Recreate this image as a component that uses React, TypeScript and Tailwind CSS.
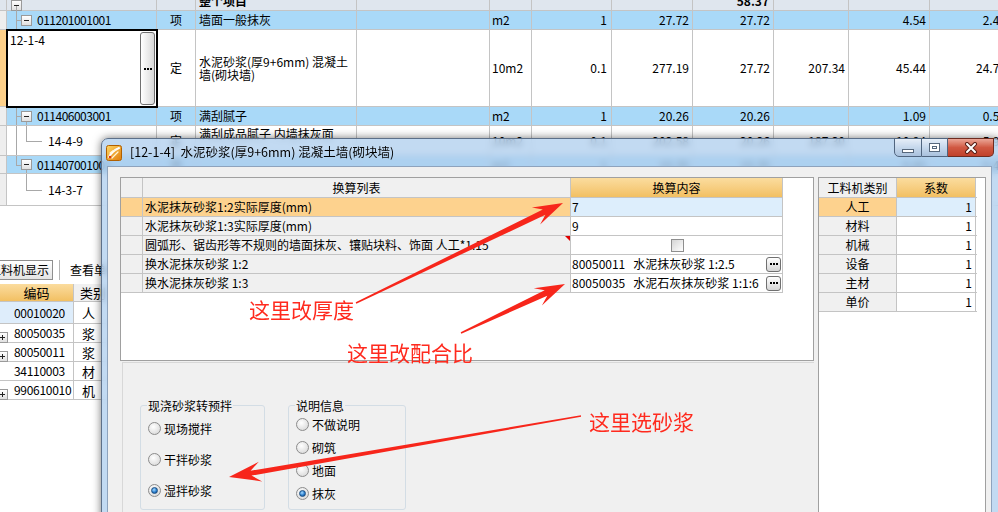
import React from "react";

const FONT = "font-['Noto_Sans_CJK_SC','Noto_Sans',sans-serif]";

const W = [
  "w-[7px]",
  "w-[150px]",
  "w-[39px]",
  "w-[161px]",
  "w-[133px]",
  "w-[42px]",
  "w-[80px]",
  "w-[81px]",
  "w-[81px]",
  "w-[75px]",
  "w-[81px]",
  "w-[80px]",
];

function Box({ plus = false }: { plus?: boolean }) {
  return (
    <span className="relative inline-flex h-[11px] w-[11px] shrink-0 items-center justify-center border border-[#9a9a9a] bg-linear-to-b from-white to-[#e0e0e0]">
      <span className="h-px w-[5px] bg-[#222]" />
      {plus && <span className="absolute h-[5px] w-px bg-[#222]" />}
    </span>
  );
}

function Dots() {
  return (
    <span className="flex gap-px">
      <span className="h-[2px] w-[2px] bg-black" />
      <span className="h-[2px] w-[2px] bg-black" />
      <span className="h-[2px] w-[2px] bg-black" />
    </span>
  );
}

function ItemCode({ code, last = false, child = false }: { code: string; last?: boolean; child?: boolean }) {
  return (
    <>
      <span className={`absolute left-[9px] top-0 w-px bg-[#a8a8a8] ${last ? "h-1/2" : "h-full"}`} />
      <span className="absolute left-[9px] top-1/2 h-px w-[5px] bg-[#a8a8a8]" />
      {child && <span className="absolute left-[19px] top-1/2 h-1/2 w-px bg-[#a8a8a8]" />}
      <div className="relative flex h-full items-center pl-[14px]">
        <Box />
        <span className="ml-[5px] tracking-[-0.5px]">{code}</span>
      </div>
    </>
  );
}

function SubCode({ code, cont = false }: { code: string; cont?: boolean }) {
  return (
    <>
      {cont && <span className="absolute left-[9px] top-0 h-full w-px bg-[#a8a8a8]" />}
      <span className="absolute left-[19px] top-0 h-1/2 w-px bg-[#a8a8a8]" />
      <span className="absolute left-[19px] top-1/2 h-px w-[16px] bg-[#a8a8a8]" />
      <div className="flex h-full items-center pl-[41px]">{code}</div>
    </>
  );
}

type GR = {
  h: string;
  bg: string;
  strip: string;
  code: React.ReactNode;
  kind?: string;
  name?: React.ReactNode;
  vals: string[];
};

function GridRow({ h, bg, strip, code, kind, name, vals }: GR) {
  return (
    <div className={`flex shrink-0 border-b border-[#c4c4c4] ${h} ${bg}`}>
      <div className={`${W[0]} shrink-0 border-r border-[#c4c4c4] ${strip}`} />
      <div className={`${W[1]} relative shrink-0 border-r border-[#c4c4c4]`}>{code}</div>
      <div className={`${W[2]} flex shrink-0 items-center justify-center border-r border-[#c4c4c4]`}>{kind}</div>
      <div className={`${W[3]} flex shrink-0 items-center border-r border-[#c4c4c4] pl-[3px]`}>{name}</div>
      <div className={`${W[4]} shrink-0 border-r border-[#c4c4c4]`} />
      <div className={`${W[5]} flex shrink-0 items-center border-r border-[#c4c4c4] pl-[2px]`}>{vals[0]}</div>
      <div className={`${W[6]} flex shrink-0 items-center justify-end border-r border-[#c4c4c4] pr-[4px]`}>{vals[1]}</div>
      <div className={`${W[7]} flex shrink-0 items-center justify-end border-r border-[#c4c4c4] pr-[3px]`}>{vals[2]}</div>
      <div className={`${W[8]} flex shrink-0 items-center justify-end border-r border-[#c4c4c4] pr-[3px]`}>{vals[3]}</div>
      <div className={`${W[9]} flex shrink-0 items-center justify-end border-r border-[#c4c4c4] pr-[3px]`}>{vals[4]}</div>
      <div className={`${W[10]} flex shrink-0 items-center justify-end border-r border-[#c4c4c4] pr-[3px]`}>{vals[5]}</div>
      <div className={`${W[11]} flex shrink-0 items-center justify-end border-r border-[#c4c4c4] pr-[3px]`}>{vals[6]}</div>
    </div>
  );
}

function Radio({ on = false, label }: { on?: boolean; label: string }) {
  return (
    <div className="flex h-[17px] items-center">
      <span className="flex h-[13px] w-[13px] items-center justify-center rounded-full border border-[#8c8c8c] bg-[radial-gradient(circle_at_40%_35%,#ffffff,#d2d2d2)]">
        {on && (
          <span className="h-[7px] w-[7px] rounded-full border border-[#1d4f82] bg-[radial-gradient(circle_at_40%_35%,#a8dcff,#2a7fd0_55%,#0c3d74)]" />
        )}
      </span>
      <span className="ml-[3px]">{label}</span>
    </div>
  );
}

function arrowPts(x1: number, y1: number, x2: number, y2: number, w0: number, w1: number, hl: number, hw: number) {
  const dx = x2 - x1;
  const dy = y2 - y1;
  const L = Math.hypot(dx, dy);
  const ux = dx / L;
  const uy = dy / L;
  const px = -uy;
  const py = ux;
  const nx = x2 - ux * hl * 0.7;
  const ny = y2 - uy * hl * 0.7;
  const bx = x2 - ux * hl;
  const by = y2 - uy * hl;
  const p = (x: number, y: number) => `${x.toFixed(1)},${y.toFixed(1)}`;
  return [
    p(x1 + (px * w0) / 2, y1 + (py * w0) / 2),
    p(nx + (px * w1) / 2, ny + (py * w1) / 2),
    p(bx + (px * hw) / 2, by + (py * hw) / 2),
    p(x2, y2),
    p(bx - (px * hw) / 2, by - (py * hw) / 2),
    p(nx - (px * w1) / 2, ny - (py * w1) / 2),
    p(x1 - (px * w0) / 2, y1 - (py * w0) / 2),
  ].join(" ");
}

export default function App() {
  const rowsList = [
    "水泥抹灰砂浆1:2实际厚度(mm)",
    "水泥抹灰砂浆1:3实际厚度(mm)",
    "圆弧形、锯齿形等不规则的墙面抹灰、镶贴块料、饰面 人工*1.15",
    "换水泥抹灰砂浆 1:2",
    "换水泥抹灰砂浆 1:3",
  ];
  const cats = ["人工", "材料", "机械", "设备", "主材", "单价"];

  return (
    <div className={`relative h-[512px] w-[998px] overflow-hidden bg-white text-[12px] leading-none text-black ${FONT}`}>
      {/* background grid */}
      <div className="flex w-[1010px] flex-col">
        <div className="flex h-[11px] shrink-0 border-b border-[#c4c4c4] bg-[#dfe6ee]">
          <div className="w-[7px] shrink-0 border-r border-[#c4c4c4]" />
          <div className="relative w-[150px] shrink-0 border-r border-[#c4c4c4]">
            <span className="absolute -top-[5px] left-[4px]">
              <Box />
            </span>
            <span className="absolute left-[9px] top-[6px] h-[5px] w-px bg-[#a8a8a8]" />
          </div>
          <div className="w-[39px] shrink-0 border-r border-[#c4c4c4]" />
          <div className="flex w-[161px] shrink-0 items-end border-r border-[#c4c4c4] pl-[3px] font-bold leading-[12px]">
            <span className="relative -top-[3px]">整个项目</span>
          </div>
          <div className="w-[133px] shrink-0 border-r border-[#c4c4c4]" />
          <div className="w-[42px] shrink-0 border-r border-[#c4c4c4]" />
          <div className="w-[80px] shrink-0 border-r border-[#c4c4c4]" />
          <div className="w-[81px] shrink-0 border-r border-[#c4c4c4]" />
          <div className="flex w-[81px] shrink-0 items-end justify-end border-r border-[#c4c4c4] pr-[4px] font-bold leading-[12px]">
            <span className="relative -top-[3px]">58.37</span>
          </div>
          <div className="w-[75px] shrink-0 border-r border-[#c4c4c4]" />
          <div className="w-[81px] shrink-0 border-r border-[#c4c4c4]" />
          <div className="w-[80px] shrink-0 border-r border-[#c4c4c4]" />
        </div>
        <GridRow
          h="h-[19px]"
          bg="bg-[#a9d9f8]"
          strip="bg-[#eeeeee]"
          code={<ItemCode code="011201001001" />}
          kind="项"
          name="墙面一般抹灰"
          vals={["m2", "1", "27.72", "27.72", "", "4.54", "2.47"]}
        />
        <GridRow
          h="h-[77px]"
          bg="bg-white"
          strip="bg-[#fdd08a]"
          code={
            <div className="absolute -left-[1px] -top-[1px] z-10 h-[79px] w-[152px] border-2 border-black bg-white">
              <span className="absolute left-[2px] top-[3px]">12-1-4</span>
              <span className="absolute bottom-[1px] right-[1px] top-[1px] flex w-[15px] items-center justify-center rounded-[3px] border border-[#707070] bg-linear-to-r from-white to-[#d8d8d8]">
                <Dots />
              </span>
            </div>
          }
          kind="定"
          name={
            <div className="leading-[13px]">
              水泥砂浆(厚9+6mm) 混凝土
              <br />
              墙(砌块墙)
            </div>
          }
          vals={["10m2", "0.1", "277.19", "27.72", "207.34", "45.44", "24.71"]}
        />
        <GridRow
          h="h-[19px]"
          bg="bg-[#a9d9f8]"
          strip="bg-[#eeeeee]"
          code={<ItemCode code="011406003001" child />}
          kind="项"
          name="满刮腻子"
          vals={["m2", "1", "20.26", "20.26", "", "1.09", "0.59"]}
        />
        <GridRow
          h="h-[30px]"
          bg="bg-white"
          strip="bg-[#eeeeee]"
          code={<SubCode code="14-4-9" cont />}
          kind="定"
          name={<div className="-mt-[14px]">满刮成品腻子 内墙抹灰面</div>}
          vals={["10m2", "0.1", "202.58", "20.26", "187.30", "10.94", "5.90"]}
        />
        <GridRow
          h="h-[18px]"
          bg="bg-[#a9d9f8]"
          strip="bg-[#eeeeee]"
          code={<ItemCode code="011407001001" last child />}
          kind="项"
          name=""
          vals={["m2", "1", "10.35", "10.35", "", "0.85", "0.43"]}
        />
        <GridRow
          h="h-[32px]"
          bg="bg-white"
          strip="bg-[#eeeeee]"
          code={<SubCode code="14-3-7" />}
          vals={["", "", "", "", "", "", ""]}
        />
      </div>

      {/* lower-left panel of the main window */}
      <div className="mt-[54px] flex h-[20px] items-center">
        <div className="-ml-[16px] flex h-[20px] items-center border border-[#8e8e8e] bg-linear-to-b from-white to-[#e4e4e4] pl-[4px] pr-[3px]">
          工料机显示
        </div>
        <span className="ml-[6px] h-[20px] w-px bg-[#b4b4b4]" />
        <span className="ml-[10px]">查看单价构成</span>
      </div>
      <div className="mt-[4px] w-[130px]">
        <div className="flex h-[18px] border-b border-[#c4c4c4]">
          <div className="flex w-[74px] items-center justify-center border-r border-[#c4c4c4] bg-linear-to-b from-[#fbdc9e] to-[#f2c062] text-[13px]">编码</div>
          <div className="flex w-[40px] items-center border-r border-[#c4c4c4] bg-[#f0f0f0] pl-[6px] text-[13px]">类别</div>
        </div>
        {[
          ["00010020", "人", false],
          ["80050035", "浆", true],
          ["80050011", "浆", true],
          ["34110003", "材", false],
          ["990610010", "机", true],
        ].map(([c, t, p], i) => (
          <div key={i} className={`flex border-b border-[#c4c4c4] ${i === 0 ? "h-[22px]" : "h-[19px]"}`}>
            <div className={`relative flex w-[74px] items-center border-r border-[#c4c4c4] pl-[14px] tracking-[-0.3px] ${i === 0 ? "bg-[#deedfb]" : "bg-white"}`}>
              {p && (
                <span className="absolute -left-[3px] top-[3px]">
                  <Box plus />
                </span>
              )}
              {c as string}
            </div>
            <div className="flex w-[40px] items-center border-r border-[#c4c4c4] pl-[8px] text-[13px]">{t as string}</div>
          </div>
        ))}
      </div>

      {/* dialog window */}
      <div className="absolute left-[101px] top-[138px] flex h-[390px] w-[900px] flex-col rounded-t-[7px] border border-[#5d7089] bg-[#aecdee]/75 shadow-[0_0_9px_rgba(0,0,0,0.55)] backdrop-blur-[3px]">
        <div className="flex h-[27px] items-center">
          <svg width="16" height="16" viewBox="0 0 16 16" className="ml-[4px] shrink-0">
            <defs>
              <linearGradient id="ig" x1="0" y1="0" x2="1" y2="1">
                <stop offset="0" stopColor="#ffd866" />
                <stop offset="1" stopColor="#e07c0a" />
              </linearGradient>
            </defs>
            <rect x="0.5" y="0.5" width="15" height="15" rx="2" fill="url(#ig)" stroke="#b06000" />
            <path d="M3 12 C5 8 8 5 13 3" stroke="#fff" strokeWidth="2" fill="none" strokeLinecap="round" />
            <path d="M4 8 C6 6 8 5 10 5 M6 13 C8 11 10 9 12 7" stroke="#fff6d8" strokeWidth="1.2" fill="none" strokeLinecap="round" />
            <circle cx="4" cy="12" r="1.3" fill="#d93a1a" />
          </svg>
          <span className="ml-[8px] whitespace-nowrap text-[12.5px]">[12-1-4]&nbsp; 水泥砂浆(厚9+6mm) 混凝土墙(砌块墙)</span>
          <div className="-mt-px ml-auto mr-[6px] flex self-start">
            <div className="flex h-[19px] w-[28px] items-center justify-center rounded-bl-[5px] border border-[#50657f] bg-linear-to-b from-[#e6eef8] via-[#c6d8ec] to-[#a9c1dd]">
              <span className="mt-[6px] h-[4px] w-[12px] border border-[#56677c] bg-white" />
            </div>
            <div className="flex h-[19px] w-[26px] items-center justify-center border-y border-r border-[#50657f] bg-linear-to-b from-[#e6eef8] via-[#c6d8ec] to-[#a9c1dd]">
              <span className="flex h-[9px] w-[11px] items-center justify-center border border-[#56677c] bg-white">
                <span className="h-[3px] w-[5px] border border-[#56677c]" />
              </span>
            </div>
            <div className="flex h-[19px] w-[46px] items-center justify-center rounded-br-[5px] border-y border-r border-[#6e2b1f] bg-linear-to-b from-[#eaa596] via-[#d05842] to-[#c0412b]">
              <svg width="14" height="12" viewBox="0 0 14 12">
                <path d="M3 2 L11 10 M11 2 L3 10" stroke="#5a2118" strokeWidth="4" strokeLinecap="round" />
                <path d="M3 2 L11 10 M11 2 L3 10" stroke="#fff" strokeWidth="2" strokeLinecap="round" />
              </svg>
            </div>
          </div>
        </div>

        <div className="ml-[5px] mr-[8px] flex flex-1 gap-[4px] border border-[#8ea3bd] bg-[#f0f0f0] pl-[12px] pt-[10px]">
          <div className="flex w-[694px] flex-col">
            <div className="h-[184px] border border-[#a0a0a0] bg-white">
              <div className="w-[662px]">
                <div className="flex h-[20px] border-b border-[#c4c4c4]">
                  <div className="w-[22px] border-r border-[#c4c4c4] bg-[#f0f0f0]" />
                  <div className="flex w-[428px] items-center justify-center border-r border-[#c4c4c4] bg-[#f0f0f0]">换算列表</div>
                  <div className="flex w-[212px] items-center justify-center border-r border-[#c4c4c4] bg-linear-to-b from-[#fbdc9e] to-[#f2c062]">换算内容</div>
                </div>
                {rowsList.map((t, i) => (
                  <div key={i} className="flex h-[19px] border-b border-[#c4c4c4]">
                    <div className={`w-[22px] border-r border-[#c4c4c4] ${i === 0 ? "bg-[#fdd28e]" : "bg-[#f0f0f0]"}`} />
                    <div className={`relative flex w-[428px] items-center whitespace-nowrap border-r border-[#c4c4c4] pl-[2px] ${i === 0 ? "bg-[#fdd28e]" : "bg-[#f0f0f0]"}`}>
                      {t}
                      {i === 2 && <span className="absolute right-0 top-0 h-0 w-0 border-l-[5px] border-t-[5px] border-l-transparent border-t-[#e00000]" />}
                    </div>
                    <div className={`flex w-[212px] items-center whitespace-nowrap border-r border-[#c4c4c4] pl-[1px] ${i === 0 ? "bg-[#ddeefc]" : "bg-white"}`}>
                      {i === 0 && "7"}
                      {i === 1 && "9"}
                      {i === 2 && (
                        <span className="mx-auto h-[13px] w-[13px] border border-[#8e8e8e] bg-linear-to-br from-[#d4d4d4] to-white" />
                      )}
                      {i === 3 && (
                        <>
                          <span>80050011</span>
                          <span className="ml-[8px]">水泥抹灰砂浆 1:2.5</span>
                        </>
                      )}
                      {i === 4 && (
                        <>
                          <span>80050035</span>
                          <span className="ml-[8px]">水泥石灰抹灰砂浆 1:1:6</span>
                        </>
                      )}
                      {i >= 3 && (
                        <span className="ml-auto mr-[1px] flex h-[15px] w-[15px] items-center justify-center rounded-[3px] border border-[#707070] bg-linear-to-b from-white to-[#d6d6d6]">
                          <Dots />
                        </span>
                      )}
                    </div>
                  </div>
                ))}
              </div>
            </div>
            <div className="ml-[2px] mt-px flex flex-1 items-start gap-[23px] border-l border-t border-[#d8d8d8] bg-[#f0f0f0] pl-[17px] pt-[35px]">
              <fieldset className="h-[112px] w-[125px] rounded-[3px] border border-[#d3dde5]">
                <legend className="ml-[6px] px-px leading-[15px]">现浇砂浆转预拌</legend>
                <div className="mt-[7px] flex flex-col gap-[14px] pl-[7px]">
                  <Radio label="现场搅拌" />
                  <Radio label="干拌砂浆" />
                  <Radio label="湿拌砂浆" on />
                </div>
              </fieldset>
              <fieldset className="h-[112px] w-[118px] rounded-[3px] border border-[#d3dde5]">
                <legend className="ml-[6px] px-px leading-[15px]">说明信息</legend>
                <div className="mt-[3px] flex flex-col gap-[6px] pl-[7px]">
                  <Radio label="不做说明" />
                  <Radio label="砌筑" />
                  <Radio label="地面" />
                  <Radio label="抹灰" on />
                </div>
              </fieldset>
            </div>
          </div>

          <div className="w-[168px] border border-[#a0a0a0] bg-white">
            <div className="w-[158px]">
              <div className="flex h-[20px] border-b border-[#c4c4c4]">
                <div className="flex w-[78px] items-center justify-center border-r border-[#c4c4c4] bg-[#f0f0f0]">工料机类别</div>
                <div className="flex w-[79px] items-center justify-center border-r border-[#c4c4c4] bg-linear-to-b from-[#fbdc9e] to-[#f2c062]">系数</div>
              </div>
              {cats.map((c, i) => (
                <div key={c} className="flex h-[19px] border-b border-[#c4c4c4]">
                  <div className={`flex w-[78px] items-center justify-center border-r border-[#c4c4c4] ${i === 0 ? "bg-[#fdd28e]" : "bg-[#f0f0f0]"}`}>{c}</div>
                  <div className={`flex w-[79px] items-center justify-end border-r border-[#c4c4c4] pr-[3px] ${i === 0 ? "bg-[#ddeefc]" : "bg-white"}`}>1</div>
                </div>
              ))}
            </div>
          </div>
        </div>
      </div>

      {/* annotations */}
      <svg className="pointer-events-none absolute left-0 top-0 z-20" width="998" height="512">
        <polygon points={arrowPts(356, 303, 563, 203, 1.5, 6, 30, 19)} fill="#f7261b" />
        <polygon points={arrowPts(461, 333, 565, 284, 1.5, 6, 30, 19)} fill="#f7261b" />
        <polygon points={arrowPts(581, 416, 229, 477, 1.5, 5, 32, 20)} fill="#f7261b" />
      </svg>
      <span className="absolute left-[249px] top-[299px] z-20 text-[21px] text-[#ff2a1e]">这里改厚度</span>
      <span className="absolute left-[347px] top-[342px] z-20 text-[21px] text-[#ff2a1e]">这里改配合比</span>
      <span className="absolute left-[589px] top-[411px] z-20 text-[21px] text-[#ff2a1e]">这里选砂浆</span>
    </div>
  );
}
